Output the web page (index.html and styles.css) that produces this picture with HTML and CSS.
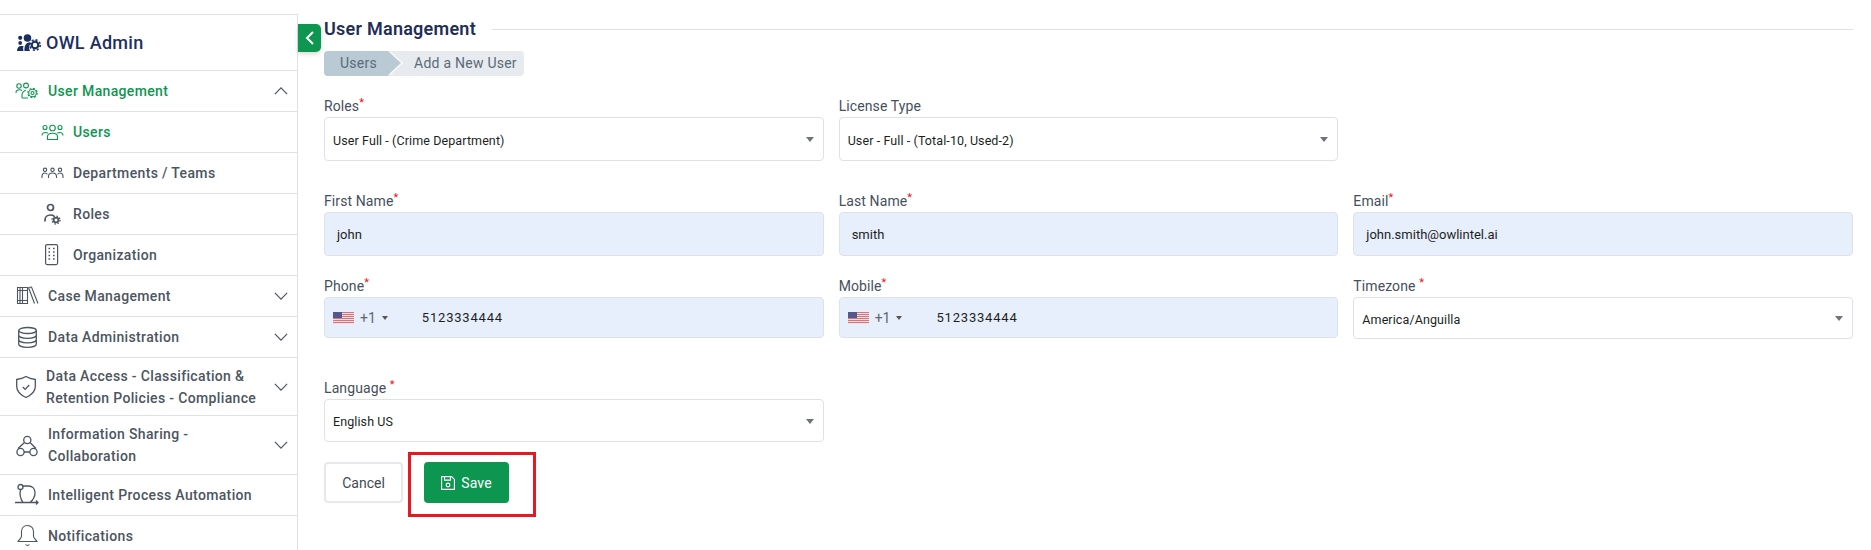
FILE: index.html
```html
<!DOCTYPE html>
<html lang="en">
<head>
<meta charset="utf-8">
<title>Add a New User</title>
<link rel="stylesheet" href="styles.css">
</head>
<body>
<div class="app">
  <aside class="sidebar">
    <div class="brand">
      <svg class="brand-icon" viewBox="0 0 24 17" fill="#1c2f63"><circle cx="10.500" cy="4" r="3.800"/><circle cx="3.200" cy="3.800" r="2.100"/><circle cx="3.200" cy="9" r="1.900"/><path d="M0 17c0-3 1.500-5 4-5h2.500c-.5 1.500-.5 3.500 0 5zM7.500 17c-.5-4 1-8.500 4.500-8.500 1 0 1.500.2 2 .5-2 2-2.500 5.500-1 8z"/><circle cx="18" cy="11" r="3.300" fill="none" stroke="#1c2f63" stroke-width="2.200"/><circle cx="18" cy="11" r="5.200" fill="none" stroke="#1c2f63" stroke-width="1.600" stroke-dasharray="2 2.080"/></svg>
      <span>OWL Admin</span>
    </div>
    <div class="nav-row active">
      <svg class="ico" viewBox="0 0 24 24" fill="none" stroke="currentColor" stroke-width="1.100"><circle cx="4" cy="7" r="2.200"/><circle cx="11" cy="6.500" r="2.400"/><path d="M1 14c0-2 1.500-3.200 3.500-3.200 1 0 2 .3 2.500 .8M7 19v-3c0-2.500 2-4.500 4-4.500M7 19h6"/><circle cx="17.500" cy="14" r="3.800"/><circle cx="17.500" cy="14" r="1.500"/><circle cx="17.500" cy="14" r="4.700" stroke-width="1.200" stroke-dasharray="1.800 1.890"/></svg>
      <span class="nav-text">User Management</span>
      <svg class="chev" viewBox="0 0 16 9" fill="none" stroke="#4c5560" stroke-width="1.400"><path d="M1 8l7-7 7 7"/></svg>
    </div>
    <div class="nav-row sub active">
      <svg class="ico" viewBox="0 0 24 24" fill="none" stroke="currentColor" stroke-width="1.100"><circle cx="12.500" cy="8" r="2.800"/><circle cx="5" cy="7.500" r="2"/><circle cx="20" cy="7.500" r="2"/><path d="M7.500 19.500v-3c0-2 2-3.300 5-3.300s5 1.300 5 3.300v3zM2 15.500c0-2 1.500-3 3.500-3 1 0 1.700.2 2.300 .8M23 15.500c0-2-1.500-3-3.500-3-1 0-1.700.2-2.300 .8"/></svg>
      <span class="nav-text">Users</span>
    </div>
    <div class="nav-row sub">
      <svg class="ico" viewBox="0 0 24 24" fill="none" stroke="#4c5560" stroke-width="1.100"><circle cx="12.500" cy="8.800" r="1.700"/><circle cx="5" cy="8.800" r="1.700"/><circle cx="20" cy="8.800" r="1.700"/><path d="M8.500 17v-1.500c0-2 1.800-3.500 4-3.500s4 1.500 4 3.500V17M2 17v-1.500c0-2 1.300-3.500 3-3.500 1 0 1.800.5 2.400 1.300M23 17v-1.500c0-2-1.300-3.500-3-3.500-1 0-1.800.5-2.400 1.300"/></svg>
      <span class="nav-text">Departments / Teams</span>
    </div>
    <div class="nav-row sub">
      <svg class="ico" viewBox="0 0 24 24" fill="none" stroke="#4c5560" stroke-width="1.700"><circle cx="10.500" cy="5.500" r="3"/><path d="M5 19.500v-1.500c0-3 2.300-5 5.500-5 1.500 0 2.500.3 3.500.8"/><circle cx="16" cy="18" r="2.400" stroke-width="1.800"/><circle cx="16" cy="18" r="4" stroke-width="1.300" stroke-dasharray="1.500 1.640"/></svg>
      <span class="nav-text">Roles</span>
    </div>
    <div class="nav-row sub">
      <svg class="ico" viewBox="0 0 24 24" fill="none" stroke="#4c5560" stroke-width="1.200"><rect x="5.600" y="1.600" width="12" height="20" rx="1.500"/><path d="M8.500 5.500h1.600M13 5.500h1.600M8.500 9h1.600M13 9h1.600M8.500 12.500h1.600M13 12.500h1.600M8.500 16h1.600M13 16h1.600" stroke-width="1.400"/></svg>
      <span class="nav-text">Organization</span>
    </div>
    <div class="nav-row">
      <svg class="ico" viewBox="0 0 24 24" fill="none" stroke="#4c5560" stroke-width="1.100"><path d="M2.500 3.500h5v16h-5zM7.500 3.500h5v16h-5zM2.500 6.500h10M2.500 16.500h10M5 3.500v16M13.500 3.500l3-.5 6.500 16.500M13.500 3.500l6 16"/></svg>
      <span class="nav-text">Case Management</span>
      <svg class="chev" viewBox="0 0 16 9" fill="none" stroke="#4c5560" stroke-width="1.400"><path d="M1 1l7 7 7-7"/></svg>
    </div>
    <div class="nav-row">
      <svg class="ico" viewBox="0 0 24 24" fill="none" stroke="#4c5560" stroke-width="1.300"><ellipse cx="12.500" cy="5.500" rx="8.800" ry="3"/><path d="M3.700 5.500v13.500c0 1.900 3.900 3.300 8.800 3.300s8.800-1.400 8.800-3.300V5.500M3.700 10c0 1.900 3.900 3.300 8.800 3.300s8.800-1.400 8.800-3.300M3.700 14.500c0 1.900 3.900 3.300 8.800 3.300s8.800-1.400 8.800-3.300"/></svg>
      <span class="nav-text">Data Administration</span>
      <svg class="chev" viewBox="0 0 16 9" fill="none" stroke="#4c5560" stroke-width="1.400"><path d="M1 1l7 7 7-7"/></svg>
    </div>
    <div class="nav-row tall">
      <svg class="ico" viewBox="0 0 24 24" fill="none" stroke="#4c5560" stroke-width="1.300"><path d="M11 1.500c2.500 1.500 5.500 2.500 9.300 3v7c0 5-4 8.500-9.300 11-5.300-2.500-9.300-6-9.300-11v-7c3.800-.5 6.800-1.500 9.300-3z"/><path d="M7.800 12l2.400 2.400 4-4.400"/></svg>
      <span class="nav-text wrap tight">Data Access - Classification &amp; Retention Policies - Compliance</span>
      <svg class="chev" viewBox="0 0 16 9" fill="none" stroke="#4c5560" stroke-width="1.400"><path d="M1 1l7 7 7-7"/></svg>
    </div>
    <div class="nav-row taller">
      <svg class="ico" viewBox="0 0 24 24" fill="none" stroke="#4c5560" stroke-width="1.300"><circle cx="12.300" cy="7" r="3.600"/><circle cx="5.500" cy="19" r="3.600"/><circle cx="18.500" cy="19" r="3.600"/><path d="M9.500 9.500L3 15.500M15 9.500l6 6M9 19h6"/></svg>
      <span class="nav-text wrap">Information Sharing - Collaboration</span>
      <svg class="chev" viewBox="0 0 16 9" fill="none" stroke="#4c5560" stroke-width="1.400"><path d="M1 1l7 7 7-7"/></svg>
    </div>
    <div class="nav-row">
      <svg class="ico" viewBox="0 0 24 24" fill="none" stroke="#4c5560" stroke-width="1.300"><path d="M0 19.500h23M21 17.500l2 2-2 2M7.500 3h6c4 0 6.500 3 6.500 7 0 4-2 7-5 9.500M5.500 7c-1 4 0 9 2.500 12.500"/><circle cx="5.500" cy="4" r="2.500"/></svg>
      <span class="nav-text">Intelligent Process Automation</span>
    </div>
    <div class="nav-row">
      <svg class="ico" viewBox="0 0 24 24" fill="none" stroke="#4c5560" stroke-width="1.100"><path d="M12.500 1.500c-4 0-6 3-6 6.500v4c0 2.500-2.500 3.500-3.500 5.500h19c-1-2-3.500-3-3.500-5.500V8c0-3.500-2-6.500-6-6.500zM10.500 20.500c1 1.200 3 1.200 4 0"/></svg>
      <span class="nav-text">Notifications</span>
    </div>
  </aside>
  <button class="toggle" type="button" aria-label="Collapse menu">
    <svg viewBox="0 0 10 16" width="10" height="16" fill="none" stroke="#fff" stroke-width="2"><path d="M8 2L2 8l6 6"/></svg>
  </button>
  <main class="main">
    <header class="title-row">
      <h1>User Management</h1>
      <div class="rule"></div>
    </header>
    <nav class="crumbs">
      <span class="crumb first">Users</span>
      <span class="crumb">Add a New User</span>
    </nav>
    <form class="form">
      <div class="row row-a">
        <div class="field"><label>Roles<sup>*</sup></label><div class="control select"><span>User Full - (Crime Department)</span></div></div>
        <div class="field"><label>License Type</label><div class="control select"><span>User - Full - (Total-10, Used-2)</span></div></div>
      </div>
      <div class="row row-b">
        <div class="field"><label>First Name<sup>*</sup></label><div class="control filled"><span>john</span></div></div>
        <div class="field"><label>Last Name<sup>*</sup></label><div class="control filled"><span>smith</span></div></div>
        <div class="field"><label>Email<sup>*</sup></label><div class="control filled"><span>john.smith@owlintel.ai</span></div></div>
      </div>
      <div class="row row-c">
        <div class="field"><label>Phone<sup>*</sup></label><div class="control filled phone">
          <svg class="flag" viewBox="0 0 21 12"><rect width="21" height="12" fill="#f3dfe2"/><path d="M0 .5h21M0 2.500h21M0 4.500h21M0 6.500h21M0 8.500h21M0 10.500h21" stroke="#d8737d" stroke-width="1"/><rect width="9" height="6" fill="#54588c"/></svg>
          <span class="dial">+1</span><i class="caret"></i><span class="num">5123334444</span></div></div>
        <div class="field"><label>Mobile<sup>*</sup></label><div class="control filled phone">
          <svg class="flag" viewBox="0 0 21 12"><rect width="21" height="12" fill="#f3dfe2"/><path d="M0 .5h21M0 2.500h21M0 4.500h21M0 6.500h21M0 8.500h21M0 10.500h21" stroke="#d8737d" stroke-width="1"/><rect width="9" height="6" fill="#54588c"/></svg>
          <span class="dial">+1</span><i class="caret"></i><span class="num">5123334444</span></div></div>
        <div class="field"><label>Timezone <sup>*</sup></label><div class="control select tz"><span>America/Anguilla</span></div></div>
      </div>
      <div class="row row-d">
        <div class="field"><label>Language <sup>*</sup></label><div class="control select lang"><span>English US</span></div></div>
      </div>
      <div class="actions">
        <button class="btn cancel" type="button">Cancel</button>
        <div class="highlight">
          <button class="btn save" type="button">
            <svg viewBox="0 0 14 14" width="14" height="14" fill="none" stroke="#fff" stroke-width="1.100"><path d="M.6.6h10l2.800 2.800v10H.6z"/><path d="M3.500.6v3.500h6V.6"/><circle cx="7" cy="9" r="1.900"/></svg>
            Save
          </button>
        </div>
      </div>
    </form>
  </main>
</div>
</body>
</html>
```
FILE: styles.css
```css
* { box-sizing: border-box; }
html, body { margin: 0; padding: 0; height: 550px; overflow: hidden; background: #fff; }
body { font-family: Roboto, "Liberation Sans", sans-serif; font-size: 14px; color: #4c5560; }
.app { display: flex; height: 550px; position: relative; }

.sidebar { width: 298px; flex: none; margin-top: 14px; border-top: 1px solid #dfe1e8; border-right: 1px solid #dfe1e8; }
.brand { height: 56px; display: flex; align-items: center; padding-left: 17px; gap: 5px; border-bottom: 1px solid #dfe1e8; font-size: 18px; font-weight: 500; color: #1c2f63; letter-spacing: .3px; }
.brand-icon { width: 24px; height: 17px; }

.nav-row { height: 41px; display: flex; align-items: center; padding: 0 9px 0 15px; border-bottom: 1px solid #dfe1e8; color: #4c5560; }
.nav-row.sub { padding-left: 40px; }
.nav-row.tall { height: 58px; }
.nav-row.taller { height: 59px; }
.nav-row.active { color: #0d9650; }
.ico { width: 24px; height: 24px; flex: none; margin-right: 9px; }
.nav-text { font-weight: 500; letter-spacing: .35px; flex: 1; line-height: 22px; }
.nav-text.wrap { max-width: 200px; }
.nav-text.tight { margin-left: -2px; max-width: 225px; }
.chev { width: 14px; height: 8px; flex: none; margin-left: auto; }

.toggle { position: absolute; left: 298px; top: 24px; width: 23px; height: 28px; padding: 0; border: 0; border-radius: 0 5px 5px 0; background: #0d9650; display: flex; align-items: center; justify-content: center; box-shadow: 0 2px 4px rgba(0,0,0,.15); }

.main { flex: 1; padding: 0 18px 0 26px; min-width: 0; }
.title-row { display: flex; align-items: center; height: 41px; padding-top: 15px; gap: 16px; margin-bottom: 10px; }
h1 { margin: 0; font-size: 18px; font-weight: 600; color: #1f2f57; letter-spacing: .25px; white-space: nowrap; }
.rule { flex: 1; height: 1px; background: #dfe1e8; margin-top: 2px; }

.crumbs { display: flex; width: 200px; height: 25px; background: #e7ebef; border-radius: 4px; color: #5a6a78; font-size: 14px; letter-spacing: .25px; line-height: 25px; white-space: nowrap; }
.crumb { display: block; padding-left: 13px; }
.crumb.first { width: 64px; padding-left: 16px; margin-right: 13px; background: #b9cad5; border-radius: 4px 0 0 4px; position: relative; }
.crumb.first::before, .crumb.first::after { content: ""; position: absolute; left: 100%; top: 0; border-top: 12.500px solid transparent; border-bottom: 12.500px solid transparent; }
.crumb.first::before { margin-left: 1.500px; border-left: 13px solid #fafbfc; }
.crumb.first::after { border-left: 13px solid #b9cad5; }

.form { margin-top: 19px; }
.row { display: grid; grid-template-columns: repeat(3, 1fr); column-gap: 15px; }
.row-a { margin-bottom: 29px; }
.row-b { margin-bottom: 19px; }
.row-c { margin-bottom: 38px; }
.row-d { margin-bottom: 20px; }
label { display: block; height: 22px; line-height: 22px; color: #46505c; font-size: 14px; letter-spacing: .1px; }
sup { color: #e8131b; font-size: 11px; line-height: 0; vertical-align: 5px; }
.control { height: 44px; display: flex; align-items: center; border: 1px solid #dfe1e8; border-radius: 4px; padding-left: 8px; color: #1b1f24; font-size: 12.500px; position: relative; letter-spacing: .1px; }
.select { padding-top: 2px; }
.select::after { content: ""; position: absolute; right: 9px; top: 50%; margin-top: -2px; border-top: 5px solid #6f7377; border-left: 4.500px solid transparent; border-right: 4.500px solid transparent; }
.filled { background: #e8effc; font-size: 13px; padding-left: 12px; letter-spacing: 0; }
.phone { height: 41px; padding-left: 8px; }
.tz { height: 42px; }
.lang { height: 43px; }
.flag { width: 21px; height: 12px; flex: none; margin-right: 6px; }
.dial { color: #5c6670; font-size: 14px; margin-right: 6px; }
.caret { width: 0; height: 0; border-top: 4px solid #555; border-left: 3px solid transparent; border-right: 3px solid transparent; margin-right: 34px; }
.num { letter-spacing: .8px; }

.actions { display: flex; align-items: flex-start; }
.btn { font: inherit; height: 41px; border-radius: 4px; }
.cancel { width: 79px; background: #fff; border: 2px solid #e6e8ee; color: #3f4952; }
.highlight { margin: -10px 0 0 5px; width: 128px; height: 65px; border: 3px solid #e8181f; padding: 7px 0 0 13px; }
.save { width: 85px; border: 0; background: #0d9650; color: #fff; display: flex; align-items: center; justify-content: center; gap: 6px; letter-spacing: .2px; }
```
